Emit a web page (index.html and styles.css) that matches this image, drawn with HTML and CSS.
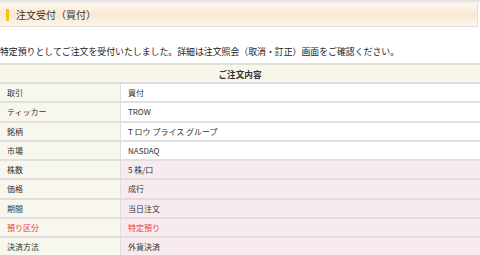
FILE: index.html
```html
<!DOCTYPE html>
<html>
<head>
    <meta charset="utf-8">
    <title>注文受付（買付）</title>
    <link rel="stylesheet" href="styles.css">
</head>
<body>
    <div class="page-title">
        <span class="marker"></span>
        <h1>注文受付（買付）</h1>
    </div>

    <p class="message">特定預りとしてご注文を受付いたしました。詳細は注文照会（取消・訂正）画面をご確認ください。</p>

    <table class="order">
        <tr>
            <th colspan="2">ご注文内容</th>
        </tr>
        <tr>
            <td class="label">取引</td>
            <td>買付</td>
        </tr>
        <tr>
            <td class="label">ティッカー</td>
            <td>TROW</td>
        </tr>
        <tr>
            <td class="label">銘柄</td>
            <td>T ロウ プライス グループ</td>
        </tr>
        <tr>
            <td class="label">市場</td>
            <td>NASDAQ</td>
        </tr>
        <tr class="input">
            <td class="label">株数</td>
            <td>5 株/口</td>
        </tr>
        <tr class="input">
            <td class="label">価格</td>
            <td>成行</td>
        </tr>
        <tr class="input">
            <td class="label">期間</td>
            <td>当日注文</td>
        </tr>
        <tr class="input alert">
            <td class="label">預り区分</td>
            <td>特定預り</td>
        </tr>
        <tr class="input">
            <td class="label">決済方法</td>
            <td>外貨決済</td>
        </tr>
    </table>
</body>
</html>
```

FILE: styles.css
```css
body {
    margin: 0;
    background-color: #fff;
    color: #333;
    font-family: "Noto Sans CJK JP", "Liberation Sans", sans-serif;
    border-top: 2px solid #e6e6e6;
}

/* 見出しバー */
.page-title {
    display: flex;
    align-items: center;
    height: 23px;
    margin-right: 2px;
    border: 1px solid #e2ddd6;
    border-top-color: #f2eee8;
    border-left: none;
    background: linear-gradient(#fdf7ef, #f9e7d1 50%, #fdf6ec);
}

.marker {
    width: 3px;
    height: 12px;
    margin: 0 7px 0 6px;
    background-color: #f2c21f;
    border-radius: 1px;
}

h1 {
    margin: 0;
    font-size: 10px;
    font-weight: normal;
    color: #333;
}

.message {
    margin: 18px 0 5px;
    font-size: 8.9px;
    line-height: 13px;
    color: #222;
}

/* 注文内容テーブル */
.order {
    width: 100%;
    border-collapse: collapse;
    font-size: 8px;
    border-top: 2px solid #e0e0e0;
}

.order th {
    height: 17px;
    padding: 0;
    background-color: #f7f6e9;
    font-size: 8.6px;
    font-weight: bold;
    text-align: center;
    color: #333;
    border-bottom: 2px solid #dcdcdc;
}

.order td {
    height: 17.25px;
    padding: 0 0 0 7px;
    border-bottom: 2px solid #e1dfdf;
    color: #333;
}

.order td.label {
    width: 113px;
    background-color: #f8f7ed;
    border-right: 1px solid #e0ded8;
}

.order tr.input td {
    background-color: #f8ebef;
    border-bottom-color: #e5dbdf;
}

.order tr.input td.label {
    background-color: #f8f7ed;
}

.order tr.alert td {
    color: #e8382e;
}
```
